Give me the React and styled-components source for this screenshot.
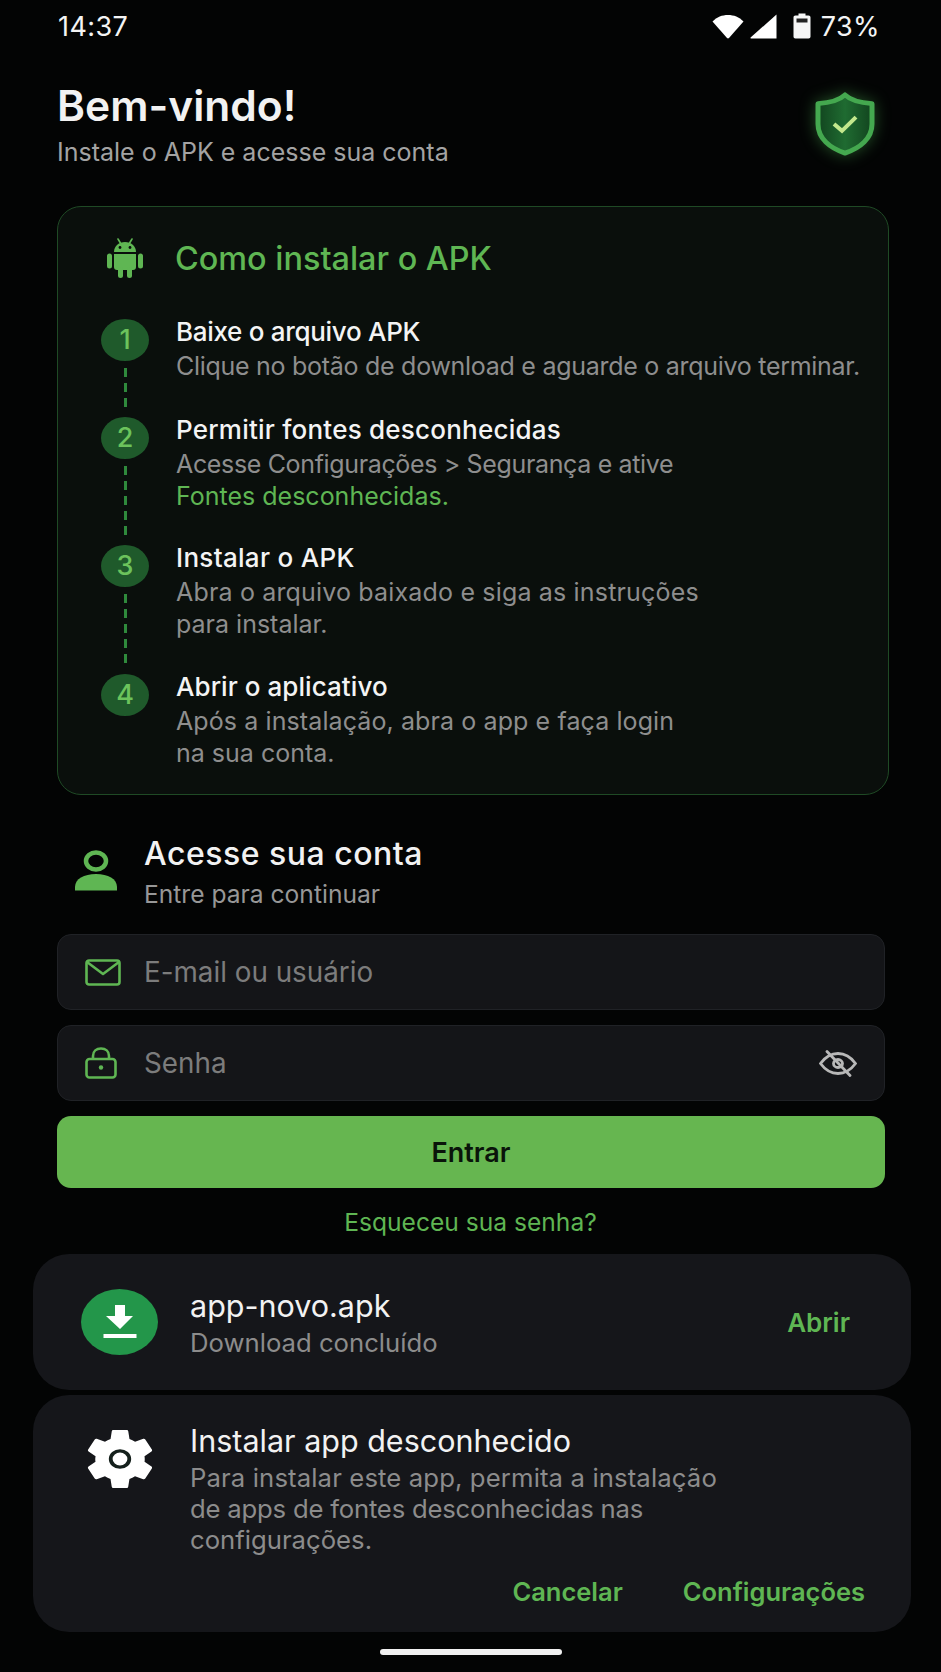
import React from 'react'
import styled, { createGlobalStyle } from 'styled-components'

const GlobalStyle = createGlobalStyle`
  * { box-sizing: border-box; }
  html, body { margin: 0; padding: 0; background: #030404; }
  body { font-family: Inter, "Liberation Sans", sans-serif; }
`

const GREEN = '#5fb653'

const Screen = styled.div`
  width: 941px;
  height: 1672px;
  overflow: hidden;
  background: #030404;
  color: #f4f4f4;
  display: flex;
  flex-direction: column;
`
const StatusBar = styled.div`
  height: 52px;
  margin-bottom: 2px;
  padding: 0 61px 0 58px;
  display: flex;
  align-items: center;
  justify-content: space-between;
  font-size: 27px;
  font-weight: 400;
  letter-spacing: 0.4px;
`
const StatusRight = styled.div`
  display: flex;
  align-items: center;
`
const Header = styled.header`
  height: 152px;
  padding: 29px 65px 0 57px;
  display: flex;
  justify-content: space-between;
`
const ShieldWrap = styled.div`
  padding-top: 9px;
`
const Heading = styled.h1`
  margin: 0;
  font-size: 42.5px;
  line-height: 46px;
  font-weight: 600;
  color: #f2f2f2;
`
const Subheading = styled.p`
  margin: 8px 0 0;
  font-size: 25px;
  line-height: 30px;
  color: #a3a3a3;
`
const InstallCard = styled.section`
  width: 832px;
  height: 589px;
  margin-left: 57px;
  padding: 30px 28px 0 43px;
  border: 1.5px solid #1f4a25;
  border-radius: 24px;
  background: #0a0f0c;
`
const CardTitle = styled.div`
  display: flex;
  align-items: center;
  gap: 32px;
  height: 42px;
  margin-bottom: 32px;
  padding-left: 6px;
  color: ${GREEN};
  font-size: 32.4px;
  font-weight: 500;
`
const Step = styled.div`
  display: flex;
  min-height: ${p => p.$height}px;
`
const StepRail = styled.div`
  width: 48px;
  margin-right: 27px;
  display: flex;
  flex-direction: column;
  align-items: center;
  padding-top: 7.5px;
`
const StepDot = styled.div`
  width: 48px;
  height: 42px;
  flex: none;
  border-radius: 50%;
  background: #1f5a2b;
  color: #6cc35c;
  font-size: 27px;
  font-weight: 500;
  display: flex;
  align-items: center;
  justify-content: center;
`
const StepLine = styled.div`
  width: 3px;
  flex: 1;
  margin: 7px 0 0;
  background: repeating-linear-gradient(to bottom, #2f8a3c 0 9px, transparent 9px 15px);
`
const StepBody = styled.div`
  flex: 1;
  padding-top: 2px;
  white-space: nowrap;
`
const StepTitle = styled.div`
  font-size: 26px;
  line-height: 37px;
  font-weight: 500;
  letter-spacing: ${p => p.$track || 0}px;
  color: #f4f4f4;
`
const StepText = styled.div`
  font-size: 25px;
  line-height: 32px;
  letter-spacing: ${p => p.$track || 0}px;
  color: #8e8e8e;
`
const Accent = styled.span`
  color: ${GREEN};
`
const LoginHead = styled.div`
  height: 139px;
  padding: 38px 0 0 75px;
  display: flex;
  gap: 27px;
`
const LoginIcon = styled.div`
  padding-top: 17px;
`
const LoginTitle = styled.div`
  font-size: 32px;
  line-height: 42px;
  font-weight: 500;
  letter-spacing: 0.5px;
  color: #f2f2f2;
`
const LoginSub = styled.div`
  margin-top: 4px;
  font-size: 24.6px;
  line-height: 30px;
  color: #979797;
`
const Form = styled.div`
  width: 828px;
  margin-left: 57px;
  display: flex;
  flex-direction: column;
  gap: 15px;
`
const Field = styled.div`
  height: 76px;
  padding: 0 27px;
  display: flex;
  align-items: center;
  border: 1px solid #202226;
  border-radius: 14px;
  background: #141518;
`
const FieldIcon = styled.div`
  width: 59px;
  display: flex;
`
const Placeholder = styled.span`
  flex: 1;
  font-size: 27.8px;
  color: #7c7c7c;
`
const SubmitButton = styled.button`
  height: 72px;
  border: none;
  border-radius: 14px;
  background: #66b650;
  color: #0a140a;
  font-family: inherit;
  font-size: 27px;
  font-weight: 600;
`
const ForgotLink = styled.a`
  height: 66px;
  padding-top: 2px;
  display: flex;
  align-items: center;
  justify-content: center;
  color: ${GREEN};
  font-size: 24.6px;
`
const Notification = styled.div`
  width: 878px;
  height: ${p => p.$height}px;
  margin: 0 0 5px 33px;
  padding: ${p => p.$pad};
  border-radius: 36px;
  background: #15161a;
  display: flex;
  align-items: ${p => p.$align};
  position: relative;
`
const NoteIcon = styled.div`
  width: 109px;
  flex: none;
  padding-left: ${p => p.$left}px;
  padding-top: ${p => p.$top}px;
`
const DownloadBadge = styled.div`
  width: 77px;
  height: 66px;
  border-radius: 50%;
  background: #23964a;
  display: flex;
  align-items: center;
  justify-content: center;
`
const NoteBody = styled.div`
  flex: 1;
`
const NoteTitle = styled.div`
  font-size: 30.5px;
  line-height: 40.5px;
  color: #f2f2f2;
`
const NoteText = styled.div`
  font-size: 25.7px;
  line-height: 31px;
  letter-spacing: ${p => p.$track || 0}px;
  color: #8c8c8c;
`
const ActionText = styled.span`
  color: ${GREEN};
  font-size: 25.5px;
  font-weight: 600;
`
const NoteActions = styled.div`
  position: absolute;
  right: 46px;
  bottom: 25px;
  display: flex;
  gap: 60px;
`
const OpenAction = styled(ActionText)`
  font-size: 26px;
  padding-right: 61px;
`
const HomeBar = styled.div`
  width: 182px;
  height: 6px;
  margin: 12px auto 0;
  border-radius: 3px;
  background: #f0f0f0;
`

const Wifi = () => (
  <svg width="32" height="25" viewBox="0 0 32 25" style={{ marginRight: 6 }}>
    <path d="M0.5 7.5 C5 3 10 1 16 1 C22 1 27 3 31.5 7.5 L17 24 C16.4 24.6 15.6 24.6 15 24 Z" fill="#fff" />
  </svg>
)
const Signal = () => (
  <svg width="27" height="25" viewBox="0 0 27 25" style={{ marginRight: 16 }}>
    <path d="M26.5 0.5 V24.5 H1 C0.4 24.5 0.2 24 0.6 23.5 Z" fill="#fff" />
  </svg>
)
const Battery = () => (
  <svg width="18" height="26" viewBox="0 0 18 26" style={{ marginRight: 10 }}>
    <path d="M5.5 0.5 H12.5 V2.5 H15.5 C16.8 2.5 17.5 3.2 17.5 4.5 V23.5 C17.5 24.8 16.8 25.5 15.5 25.5 H2.5 C1.2 25.5 0.5 24.8 0.5 23.5 V4.5 C0.5 3.2 1.2 2.5 2.5 2.5 H5.5 Z" fill="#f6f6f6" />
    <rect x="3.5" y="5.5" width="11" height="4" fill="#222" />
  </svg>
)
const Shield = () => (
  <svg width="62" height="64" viewBox="0 0 62 66" preserveAspectRatio="none" style={{ filter: 'drop-shadow(0 0 8px rgba(76,175,80,.45))' }}>
    <defs>
      <linearGradient id="shieldFill" x1="0" x2="1" y1="0" y2="0">
        <stop offset="0" stopColor="#12451f" />
        <stop offset=".5" stopColor="#1f6b31" />
        <stop offset="1" stopColor="#12451f" />
      </linearGradient>
    </defs>
    <path d="M31 3 C36 8 44 11 58 12 V33 C58 48 46 58 31 63 C16 58 4 48 4 33 V12 C18 11 26 8 31 3 Z" fill="url(#shieldFill)" stroke="#44a84f" strokeWidth="5" strokeLinejoin="round" />
    <path d="M20 33 L28 40 L42 26" fill="none" stroke="#c3e88d" strokeWidth="4" />
  </svg>
)
const AndroidBot = () => (
  <svg width="36" height="40" viewBox="0 0 36 40" fill={GREEN}>
    <path d="M11 1 L14 6 M25 1 L22 6" stroke={GREEN} strokeWidth="1.6" strokeLinecap="round" />
    <path d="M7 14 C7 8 12 4 18 4 C24 4 29 8 29 14 Z" />
    <circle cx="13" cy="9.5" r="1.4" fill="#0a0f0c" />
    <circle cx="23" cy="9.5" r="1.4" fill="#0a0f0c" />
    <path d="M7 16 H29 V29 C29 31 28 32 26 32 H10 C8 32 7 31 7 29 Z" />
    <rect x="0" y="15.5" width="5" height="15" rx="2.5" />
    <rect x="31" y="15.5" width="5" height="15" rx="2.5" />
    <rect x="11" y="29" width="5" height="11" rx="2.5" />
    <rect x="20" y="29" width="5" height="11" rx="2.5" />
  </svg>
)
const Person = () => (
  <svg width="42" height="41" viewBox="0 0 42 41">
    <ellipse cx="21" cy="11" rx="10" ry="8.5" fill="none" stroke={GREEN} strokeWidth="4.5" />
    <path d="M0 40.5 V37 C0 29 9 24 21 24 C33 24 42 29 42 37 V40.5 Z" fill={GREEN} />
  </svg>
)
const MailIcon = () => (
  <svg width="36" height="27" viewBox="0 0 36 27" fill="none" stroke={GREEN} strokeWidth="2.6" strokeLinejoin="round">
    <rect x="1.5" y="1.5" width="33" height="24" rx="2.5" />
    <path d="M2 3 L18 15 L34 3" />
  </svg>
)
const LockIcon = () => (
  <svg width="32" height="32" viewBox="0 0 32 32" fill="none" stroke={GREEN} strokeWidth="2.6">
    <rect x="1.5" y="12" width="29" height="18.5" rx="3" />
    <path d="M8 12 V9 C8 4 11.5 1.5 16 1.5 C20.5 1.5 24 4 24 9 V12" />
    <circle cx="16" cy="20.5" r="2.2" fill={GREEN} stroke="none" />
  </svg>
)
const EyeOff = () => (
  <svg width="38" height="27" viewBox="0 0 38 27" fill="none" stroke="#b8b8b8" strokeWidth="2.8" strokeLinecap="round">
    <path d="M1.5 13.5 C7 6 13 3.5 19 3.5 C25 3.5 31 6 36.5 13.5 C31 21 25 23.5 19 23.5 C13 23.5 7 21 1.5 13.5 Z" />
    <ellipse cx="19" cy="13.5" rx="4.5" ry="4" />
    <path d="M8 1.5 L31 25.5" />
  </svg>
)
const DownloadGlyph = () => (
  <svg width="34" height="34" viewBox="0 0 34 34" fill="#fff">
    <path d="M12 0 H22 V11 H30 L17 24 L3 11 H12 Z" />
    <rect x="0.5" y="29" width="33" height="4" />
  </svg>
)
const Gear = () => (
  <svg width="66" height="58" viewBox="2.4 2.4 19.2 19.2" preserveAspectRatio="none">
    <path fill="#fff" d="M19.14 12.94c.04-.3.06-.61.06-.94 0-.32-.02-.64-.07-.94l2.03-1.58c.18-.14.23-.41.12-.61l-1.92-3.32c-.12-.22-.37-.29-.59-.22l-2.39.96c-.5-.38-1.03-.7-1.62-.94l-.36-2.54c-.04-.24-.24-.41-.48-.41h-3.84c-.24 0-.43.17-.47.41l-.36 2.54c-.59.24-1.13.57-1.62.94l-2.39-.96c-.22-.08-.47 0-.59.22L2.74 8.87c-.12.21-.08.47.12.61l2.03 1.58c-.05.3-.09.63-.09.94s.02.64.07.94l-2.03 1.58c-.18.14-.23.41-.12.61l1.92 3.32c.12.22.37.29.59.22l2.39-.96c.5.38 1.03.7 1.62.94l.36 2.54c.05.24.24.41.48.41h3.84c.24 0 .44-.17.47-.41l.36-2.54c.59-.24 1.13-.56 1.62-.94l2.39.96c.22.08.47 0 .59-.22l1.92-3.32c.12-.22.07-.47-.12-.61l-2.01-1.58z" />
    <circle cx="12" cy="12" r="2.7" fill="none" stroke="#15201c" strokeWidth="1.1" />
  </svg>
)

const steps = [
  { n: 1, title: 'Baixe o arquivo APK', track: -0.3, height: 98, lines: [{ text: 'Clique no botão de download e aguarde o arquivo terminar.', track: -0.28 }] },
  { n: 2, title: 'Permitir fontes desconhecidas', track: 0.22, height: 128, lines: [{ text: 'Acesse Configurações > Segurança e ative', track: -0.35 }, { text: <Accent>Fontes desconhecidas.</Accent> }] },
  { n: 3, title: 'Instalar o APK', track: 0.3, height: 129, lines: [{ text: 'Abra o arquivo baixado e siga as instruções', track: 0.17 }, { text: 'para instalar.' }] },
  { n: 4, title: 'Abrir o aplicativo', track: 0.06, height: 100, lines: [{ text: 'Após a instalação, abra o app e faça login', track: 0.1 }, { text: 'na sua conta.' }] },
]

export default function App() {
  return (
    <Screen>
      <GlobalStyle />
      <StatusBar>
        <span>14:37</span>
        <StatusRight><Wifi /><Signal /><Battery /><span>73%</span></StatusRight>
      </StatusBar>
      <Header>
        <div>
          <Heading>Bem-vindo!</Heading>
          <Subheading>Instale o APK e acesse sua conta</Subheading>
        </div>
        <ShieldWrap><Shield /></ShieldWrap>
      </Header>
      <InstallCard>
        <CardTitle><AndroidBot />Como instalar o APK</CardTitle>
        {steps.map((s, i) => (
          <Step key={s.n} $height={s.height}>
            <StepRail>
              <StepDot>{s.n}</StepDot>
              {i < steps.length - 1 && <StepLine />}
            </StepRail>
            <StepBody>
              <StepTitle $track={s.track}>{s.title}</StepTitle>
              {s.lines.map((l, j) => <StepText key={j} $track={l.track}>{l.text}</StepText>)}
            </StepBody>
          </Step>
        ))}
      </InstallCard>
      <LoginHead>
        <LoginIcon><Person /></LoginIcon>
        <div>
          <LoginTitle>Acesse sua conta</LoginTitle>
          <LoginSub>Entre para continuar</LoginSub>
        </div>
      </LoginHead>
      <Form>
        <Field>
          <FieldIcon><MailIcon /></FieldIcon>
          <Placeholder>E-mail ou usuário</Placeholder>
        </Field>
        <Field>
          <FieldIcon><LockIcon /></FieldIcon>
          <Placeholder>Senha</Placeholder>
          <EyeOff />
        </Field>
        <SubmitButton>Entrar</SubmitButton>
      </Form>
      <ForgotLink>Esqueceu sua senha?</ForgotLink>
      <Notification $height={136} $pad="0 0 0 48px" $align="center">
        <NoteIcon $left={0} $top={0}><DownloadBadge><DownloadGlyph /></DownloadBadge></NoteIcon>
        <NoteBody>
          <NoteTitle>app-novo.apk</NoteTitle>
          <NoteText>Download concluído</NoteText>
        </NoteBody>
        <OpenAction>Abrir</OpenAction>
      </Notification>
      <Notification $height={237} $pad="26px 0 0 48px" $align="flex-start">
        <NoteIcon $left={6} $top={9}><Gear /></NoteIcon>
        <NoteBody>
          <NoteTitle>Instalar app desconhecido</NoteTitle>
          <NoteText $track={0.12}>Para instalar este app, permita a instalação</NoteText>
          <NoteText $track={-0.21}>de apps de fontes desconhecidas nas</NoteText>
          <NoteText>configurações.</NoteText>
        </NoteBody>
        <NoteActions>
          <ActionText>Cancelar</ActionText>
          <ActionText>Configurações</ActionText>
        </NoteActions>
      </Notification>
      <HomeBar />
    </Screen>
  )
}
